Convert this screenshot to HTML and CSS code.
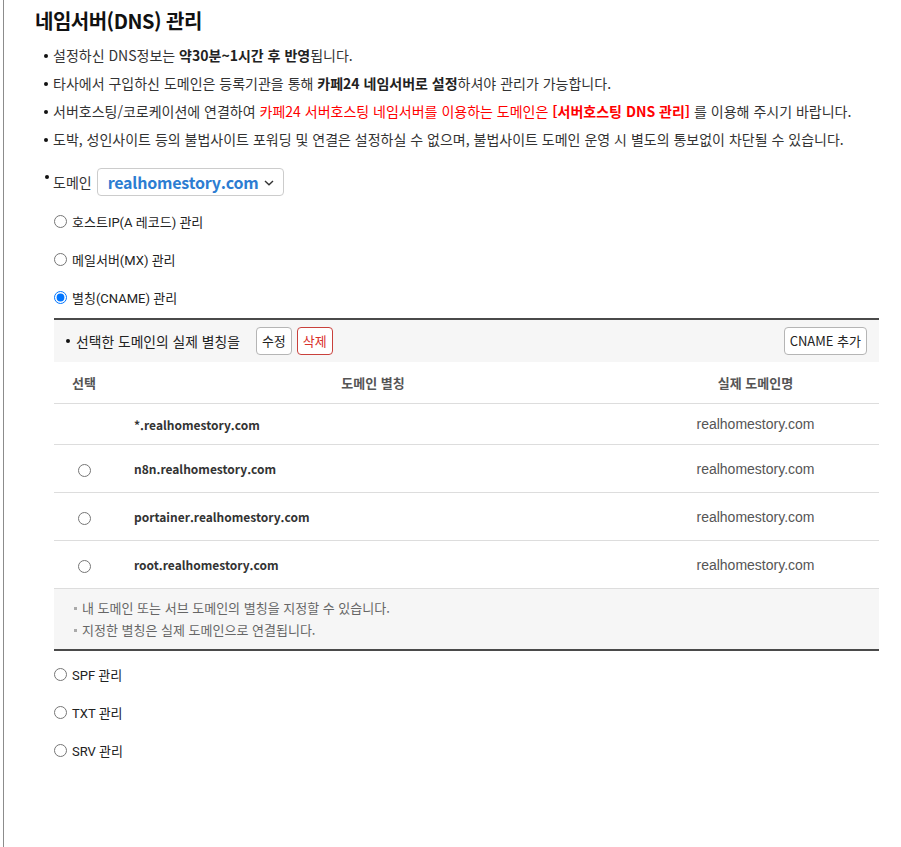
FILE: index.html
```html
<!DOCTYPE html>
<html lang="ko">
<head>
<meta charset="utf-8">
<title>네임서버(DNS) 관리</title>
<link rel="stylesheet" href="styles.css">
</head>
<body>
<div class="frame">
  <h2 class="title">네임서버(DNS) 관리</h2>
  <ul class="notice">
    <li>설정하신 DNS정보는 <b>약30분~1시간 후 반영</b>됩니다.</li>
    <li>타사에서 구입하신 도메인은 등록기관을 통해 <b>카페24 네임서버로 설정</b>하셔야 관리가 가능합니다.</li>
    <li>서버호스팅/코로케이션에 연결하여 <span class="red">카페24 서버호스팅 네임서버를 이용하는 도메인은 <b>[서버호스팅 DNS 관리]</b></span> 를 이용해 주시기 바랍니다.</li>
    <li>도박, 성인사이트 등의 불법사이트 포워딩 및 연결은 설정하실 수 없으며, 불법사이트 도메인 운영 시 별도의 통보없이 차단될 수 있습니다.</li>
  </ul>

  <div class="domain-row">
    <span class="dot-up"></span>
    <span class="domain-label">도메인</span>
    <div class="select">
      <span class="select-value">realhomestory.com</span>
      <svg class="chev" width="10" height="6" viewBox="0 0 10 6"><path d="M1 1 L5 4.8 L9 1" fill="none" stroke="#333" stroke-width="1.4"/></svg>
    </div>
  </div>

  <div class="options">
    <label class="opt"><input type="radio" name="rec"> 호스트IP(A 레코드) 관리</label>
    <label class="opt"><input type="radio" name="rec"> 메일서버(MX) 관리</label>
    <label class="opt"><input type="radio" name="rec" checked> 별칭(CNAME) 관리</label>
  </div>

  <div class="panel">
    <div class="toolbar">
      <div class="toolbar-left">
        <span class="tb-text">선택한 도메인의 실제 별칭을</span>
        <button class="btn">수정</button>
        <button class="btn btn-red">삭제</button>
      </div>
      <button class="btn">CNAME 추가</button>
    </div>
    <table class="grid">
      <colgroup><col class="c1"><col class="c2"><col class="c3"></colgroup>
      <thead>
        <tr><th>선택</th><th>도메인 별칭</th><th>실제 도메인명</th></tr>
      </thead>
      <tbody>
        <tr class="first"><td></td><td class="alias">*.realhomestory.com</td><td class="real">realhomestory.com</td></tr>
        <tr><td class="sel"><input type="radio" name="cn"></td><td class="alias">n8n.realhomestory.com</td><td class="real">realhomestory.com</td></tr>
        <tr><td class="sel"><input type="radio" name="cn"></td><td class="alias">portainer.realhomestory.com</td><td class="real">realhomestory.com</td></tr>
        <tr><td class="sel"><input type="radio" name="cn"></td><td class="alias">root.realhomestory.com</td><td class="real">realhomestory.com</td></tr>
      </tbody>
    </table>
    <ul class="help">
      <li>내 도메인 또는 서브 도메인의 별칭을 지정할 수 있습니다.</li>
      <li>지정한 별칭은 실제 도메인으로 연결됩니다.</li>
    </ul>
  </div>

  <div class="options options-bottom">
    <label class="opt"><input type="radio" name="rec"> SPF 관리</label>
    <label class="opt"><input type="radio" name="rec"> TXT 관리</label>
    <label class="opt"><input type="radio" name="rec"> SRV 관리</label>
  </div>
</div>
</body>
</html>
```

FILE: styles.css
```css
html, body {
  margin: 0;
  padding: 0;
  background: #fff;
}
body {
  font-family: "Noto Sans CJK KR", "Noto Sans", sans-serif;
  color: #333;
  font-size: 13px;
}
.frame {
  margin-left: 3px;
  border-left: 1px solid #8c8c8c;
  min-height: 847px;
  box-sizing: border-box;
  padding: 0 22px 0 31px;
}
.title {
  margin: 0;
  padding-top: 6px;
  font-size: 20px;
  line-height: 30px;
  font-weight: 700;
  color: #111;
  letter-spacing: -0.5px;
}
.notice {
  list-style: none;
  margin: 5px 0 0 0;
  padding: 0 0 0 18px;
}
.notice li {
  position: relative;
  line-height: 28px;
  font-size: 14px;
  color: #333;
}
.notice li::before {
  content: "";
  position: absolute;
  left: -9px;
  top: 13px;
  width: 4px;
  height: 4px;
  border-radius: 50%;
  background: #111;
}
.notice b { color: #222; }
.red { color: #f00; }
.red b { color: #f00; }

.domain-row {
  display: flex;
  align-items: center;
  margin-top: 15px;
  padding-left: 10px;
  height: 28px;
}
.dot-up {
  width: 4px;
  height: 4px;
  border-radius: 50%;
  background: #111;
  align-self: flex-start;
  margin-top: 7px;
  margin-right: 4px;
}
.domain-label {
  font-size: 14px;
  color: #333;
  margin-right: 5px;
}
.select {
  box-sizing: border-box;
  width: 187px;
  height: 28px;
  border: 1px solid #ccc;
  border-radius: 4px;
  display: flex;
  align-items: center;
  justify-content: space-between;
  padding: 0 9px 0 10px;
}
.select-value {
  font-size: 16px;
  font-weight: 700;
  color: #2d7dd2;
  white-space: nowrap;
  letter-spacing: -0.2px;
}
.chev { flex-shrink: 0; margin-top: 1px; }

.options {
  display: flex;
  flex-direction: column;
  padding-left: 19px;
  margin-top: 6px;
}
.opt {
  display: flex;
  align-items: center;
  height: 38px;
  font-family: Roboto, "Noto Sans CJK KR", sans-serif;
  font-size: 13px;
  color: #222;
}
.opt input {
  margin: 0 5px 0 0;
  width: 13px;
  height: 13px;
}
.options-bottom { margin-top: 4px; }

.panel {
  margin-left: 19px;
  margin-top: 2px;
  border-top: 2px solid #4a4a4a;
  border-bottom: 2px solid #4a4a4a;
}
.toolbar {
  background: #f6f6f6;
  height: 42px;
  display: flex;
  align-items: center;
  justify-content: space-between;
  padding: 0 12px 0 12px;
}
.toolbar-left {
  display: flex;
  align-items: center;
}
.tb-text {
  position: relative;
  padding-left: 10px;
  font-size: 13.8px;
  color: #222;
  margin-right: 16px;
}
.tb-text::before {
  content: "";
  position: absolute;
  left: 0;
  top: 50%;
  margin-top: -2px;
  width: 4px;
  height: 4px;
  border-radius: 50%;
  background: #111;
}
.btn {
  font-family: "Noto Sans CJK KR", sans-serif;
  font-size: 13px;
  height: 28px;
  padding: 0 5px;
  border: 1px solid #b5b5b5;
  border-radius: 4px;
  background: #fff;
  color: #222;
  margin-right: 5px;
  line-height: 26px;
}
.toolbar > .btn { margin-right: 0; }
.btn-red {
  border-color: #c9413c;
  color: #d9302a;
}

.grid {
  width: 100%;
  border-collapse: collapse;
  table-layout: fixed;
}
.c1 { width: 60px; }
.c3 { width: 247px; }
.grid th {
  height: 41px;
  font-size: 13px;
  font-weight: 700;
  color: #555;
  border-bottom: 1px solid #ddd;
  padding: 0;
}
.grid td {
  height: 47px;
  border-bottom: 1px solid #ddd;
  padding: 0;
}
.grid tr.first td { height: 40px; }
.sel { text-align: center; }
.sel input {
  margin: 0;
  width: 13px;
  height: 13px;
  vertical-align: middle;
}
.alias {
  padding-left: 20px !important;
  font-size: 12px;
  font-weight: 700;
  color: #333;
}
.real {
  text-align: center;
  font-family: "Liberation Sans", Arial, sans-serif;
  font-size: 14px;
  color: #555;
}
.help {
  list-style: none;
  margin: 0;
  background: #f6f6f6;
  padding: 8px 0 8px 28px;
}
.help li {
  position: relative;
  line-height: 22px;
  font-size: 13px;
  color: #666;
}
.help li::before {
  content: "";
  position: absolute;
  left: -8px;
  top: 10px;
  width: 3px;
  height: 3px;
  background: #aaa;
}
```
